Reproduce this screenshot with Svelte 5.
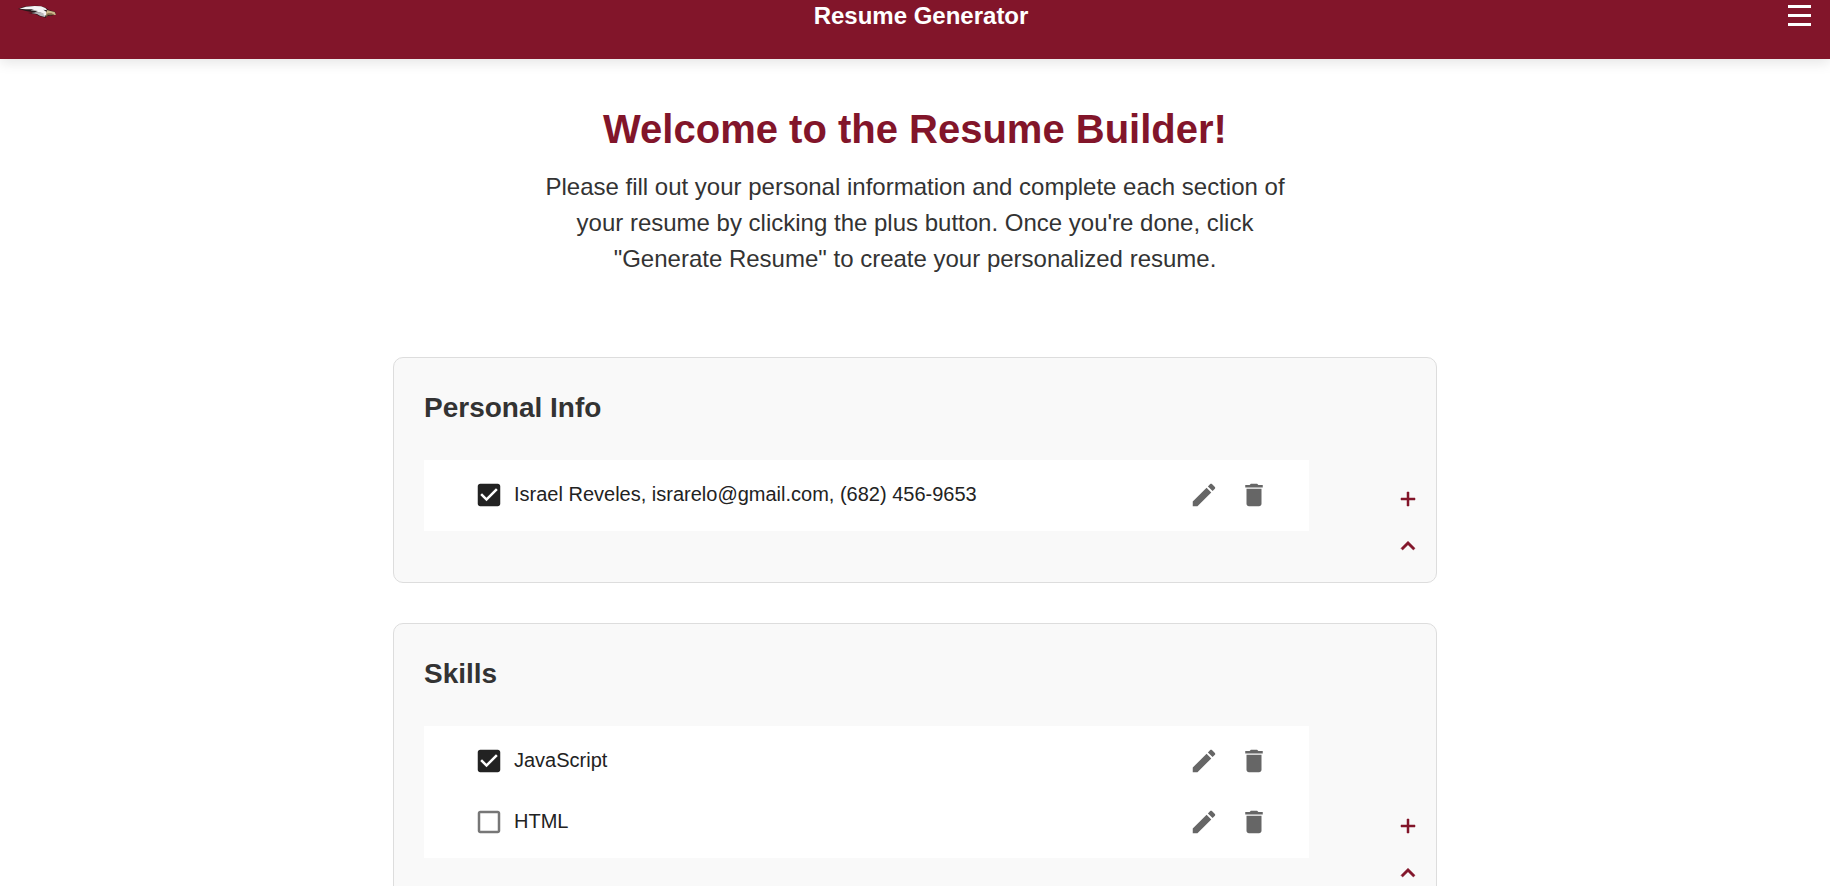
<script>
  let sections = $state([
    {
      title: 'Personal Info',
      open: true,
      items: [{ text: 'Israel Reveles, israrelo@gmail.com, (682) 456-9653', checked: true }]
    },
    {
      title: 'Skills',
      open: true,
      items: [
        { text: 'JavaScript', checked: true },
        { text: 'HTML', checked: false }
      ]
    }
  ]);
</script>

<header>
  <svg class="logo" viewBox="48 12 123 45" role="img" aria-label="Hawk logo">
    <path fill="#26191b" d="M54 27 L70 20 L90 18 L112 17 L132 21 L145 29 L165 36 L168 43 L154 47 L143 47 L137 53 L119 49 L108 43 L84 39 L100 37 L78 33 L64 29 Z" />
    <path fill="#f4f4f4" d="M58 26 L78 20 L104 18 L123 19 L136 24 L142 31 L138 36 L139 44 L135 48 L125 46 L130 41 L116 41 L123 36 L104 37 L114 33 L92 31 L102 28 L78 28 Z" />
    <path fill="#b9b9bd" d="M108 37 L128 36 L119 40 L133 41 L129 46 L137 48 L134 51 L120 47 L111 42 L94 39 Z" />
    <path fill="#cdb78a" d="M141 30 L152 33 L164 36 L168 44 L163 45 L155 42 L144 43 L139 47 L138 38 Z" />
    <path fill="#806848" d="M143 40 L155 40 L163 44 L151 46 L144 45 L139 50 L137 47 Z" />
    <path fill="#26191b" d="M130 29 L142 31 L139 35 Z" />
  </svg>
  <span class="brand">Resume Generator</span>
  <button class="menu" type="button" aria-label="Menu">
    <svg viewBox="0 0 29 31" fill="#fff">
      <path d="M3 5h23v3H3zM3 14h23v3H3zM3 23h23v3H3z" />
    </svg>
  </button>
</header>

<main>
  <section class="intro">
    <h1>Welcome to the Resume Builder!</h1>
    <p>
      Please fill out your personal information and complete each section of your resume by
      clicking the plus button. Once you're done, click "Generate Resume" to create your
      personalized resume.
    </p>
  </section>

  {#each sections as section}
    <section class="card">
      <h2>{section.title}</h2>
      <div class="body">
        <ul>
          {#each section.items as item}
            <li>
              <label>
                <span class="check">
                  <input type="checkbox" bind:checked={item.checked} />
                  <svg class="icon" class:on={item.checked} viewBox="0 0 24 24">
                    {#if item.checked}
                      <path d="M19 3H5c-1.11 0-2 .9-2 2v14c0 1.1.89 2 2 2h14c1.11 0 2-.9 2-2V5c0-1.1-.89-2-2-2zm-9 14l-5-5 1.41-1.41L10 14.17l7.59-7.59L19 8l-9 9z" />
                    {:else}
                      <path d="M19 5v14H5V5h14m0-2H5c-1.1 0-2 .9-2 2v14c0 1.1.9 2 2 2h14c1.1 0 2-.9 2-2V5c0-1.1-.9-2-2-2z" />
                    {/if}
                  </svg>
                </span>
                {item.text}
              </label>
              <button type="button" aria-label="Edit">
                <svg class="icon" viewBox="0 0 24 24">
                  <path d="M3 17.25V21h3.75L17.81 9.94l-3.75-3.75L3 17.25zM20.71 7.04c.39-.39.39-1.02 0-1.41l-2.34-2.34c-.39-.39-1.02-.39-1.41 0l-1.83 1.83 3.75 3.75 1.83-1.83z" />
                </svg>
              </button>
              <button type="button" aria-label="Delete">
                <svg class="icon" viewBox="0 0 24 24">
                  <path d="M6 19c0 1.1.9 2 2 2h8c1.1 0 2-.9 2-2V7H6v12zM19 4h-3.500l-1-1h-5l-1 1H5v2h14V4z" />
                </svg>
              </button>
            </li>
          {/each}
        </ul>
        <div class="controls">
          <button type="button" aria-label="Add">
            <svg class="add" viewBox="0 0 24 24"><path d="M19 13h-6v6h-2v-6H5v-2h6V5h2v6h6v2z" /></svg>
          </button>
          <button type="button" aria-label="Collapse" onclick={() => (section.open = !section.open)}>
            <svg class="fold" viewBox="0 0 24 24"><path d="M12 8l-6 6 1.410 1.410L12 10.830l4.590 4.580L18 14z" /></svg>
          </button>
        </div>
      </div>
    </section>
  {/each}
</main>

<style>
  :global(body) {
    margin: 0;
    background: #fff;
    color: #333;
    font-family: 'Liberation Sans', Arial, sans-serif;
  }
  header {
    display: flex;
    justify-content: space-between;
    align-items: flex-start;
    box-sizing: border-box;
    height: 59px;
    padding: 0 16px;
    background: #82152a;
    box-shadow: 0 4px 12px rgba(0, 0, 0, 0.1);
  }
  .logo {
    width: 41px;
    height: 15px;
    margin-top: 4px;
  }
  .brand {
    color: #fff;
    font-size: 24px;
    font-weight: 700;
    line-height: 32px;
  }
  button {
    display: grid;
    place-items: center;
    padding: 0;
    border: 0;
    background: none;
    color: inherit;
    cursor: pointer;
  }
  svg {
    display: block;
  }
  .menu svg {
    width: 29px;
    height: 31px;
  }
  main {
    max-width: 1044px;
    margin: 0 auto;
    padding: 46px 0 40px;
  }
  .intro {
    max-width: 750px;
    margin: 0 auto 80px;
    text-align: center;
  }
  h1 {
    margin: 0 0 16px;
    color: #82152a;
    font-size: 40px;
    line-height: 48px;
  }
  p {
    margin: 0;
    font-size: 24px;
    line-height: 36px;
  }
  .card {
    box-sizing: border-box;
    margin-bottom: 40px;
    padding: 30px 12px 20px 30px;
    border: 1px solid #ddd;
    border-radius: 10px;
    background: #f9f9f9;
  }
  h2 {
    margin: 0 0 32px;
    font-size: 28px;
    line-height: 40px;
  }
  .body {
    display: flex;
    gap: 83px;
  }
  ul {
    flex: 1;
    margin: 0 0 31px;
    padding: 4px 40px 6px 50px;
    background: #fff;
    list-style: none;
  }
  li {
    display: flex;
    align-items: center;
    gap: 20px;
    height: 61px;
    color: #666;
  }
  label {
    display: flex;
    flex: 1;
    align-items: center;
    gap: 10px;
    color: #222;
    font-size: 20px;
  }
  .check {
    display: grid;
    color: #777;
  }
  .check > * {
    grid-area: 1 / 1;
  }
  input {
    width: 30px;
    height: 30px;
    margin: 0;
    appearance: none;
  }
  .icon {
    width: 30px;
    height: 30px;
    fill: currentColor;
    pointer-events: none;
  }
  .on {
    color: #222;
  }
  .controls {
    display: flex;
    flex-direction: column;
    justify-content: flex-end;
    gap: 15px;
    color: #82152a;
  }
  .controls button {
    width: 32px;
    height: 32px;
  }
  .controls svg {
    fill: currentColor;
    stroke: currentColor;
    stroke-width: 0.5;
  }
  .add {
    width: 24px;
    height: 24px;
  }
  .fold {
    width: 28px;
    height: 28px;
  }
</style>
